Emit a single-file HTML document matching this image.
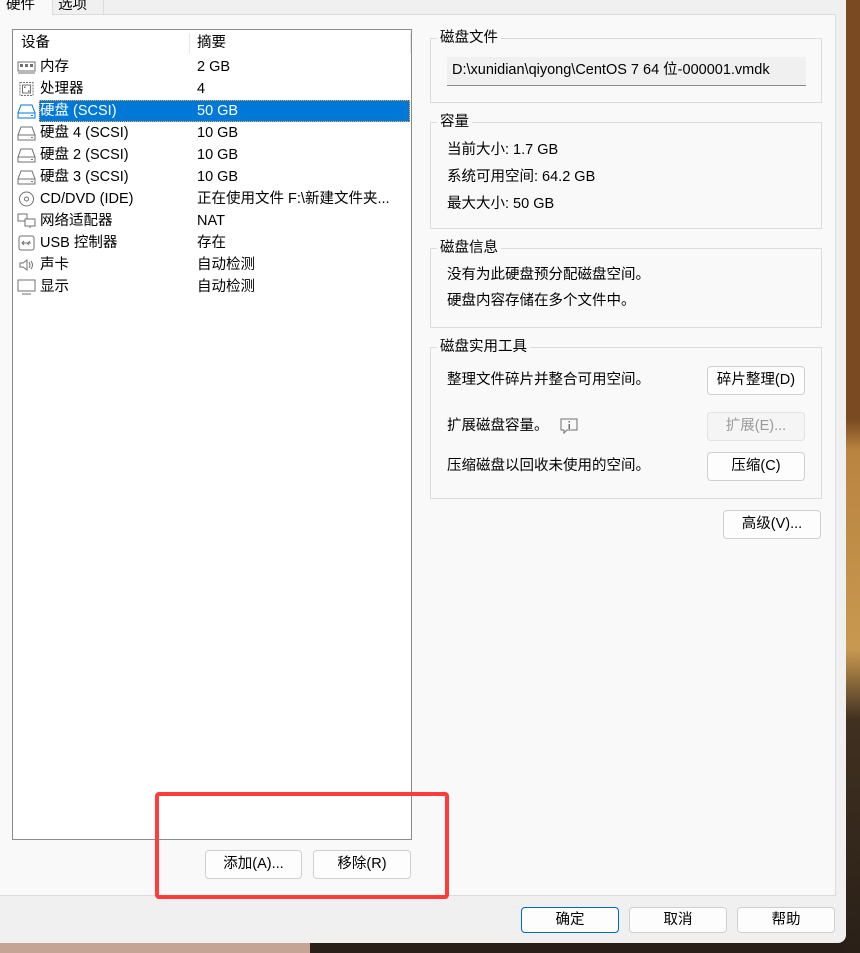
<!DOCTYPE html>
<html><head><meta charset="utf-8"><style>
*{box-sizing:border-box;margin:0;padding:0}
body{width:860px;height:953px;overflow:hidden;position:relative;background:#2a1e18;font-family:"Liberation Sans","Noto Sans CJK SC",sans-serif;font-size:14.5px;color:#000}
.abs{position:absolute}
.bgr{left:846px;top:0;width:14px;height:953px;background:linear-gradient(#7a4a22 0,#7a4a22 420px,#b98440 450px,#c89850 650px,#403020 720px,#2a2018 953px)}
.bgb{left:0;top:943px;width:310px;height:10px;background:#c4a494}
.dlg{left:0;top:0;width:846px;height:943px;background:#f0f0f0;border-bottom-right-radius:8px}
.panel{left:0;top:14px;width:836px;height:882px;background:#f9f9f9;border:1px solid #dcdcdc;border-left:none}
.tab1{left:0;top:0;width:53px;height:15px;background:#f9f9f9;border-right:1px solid #dcdcdc}
.tab2{left:54px;top:0;width:50px;height:14px;background:#f0f0f0;border-right:1px solid #dcdcdc}
.tabt{top:-7px;font-size:14.5px}
.list{left:12px;top:29px;width:400px;height:811px;background:#fff;border:1px solid #8a8a90}
.row{position:absolute;left:0;height:22px;line-height:22px;width:397px}
.row .n{position:absolute;left:27px}
.row .v{position:absolute;left:184px}
.sel{background:#0078d7;color:#fff}
.ico{position:absolute;left:4px;top:3px;width:19px;height:16px}
.grp{position:absolute;left:430px;width:392px;border:1px solid #dcdcdc}
.gl{position:absolute;left:6px;top:-10px;background:#f9f9f9;padding:0 3px;line-height:18px}
.t{position:absolute;left:16px;line-height:18px}
.btn{position:absolute;height:29px;background:#fdfdfd;border:1px solid #d0d0d0;border-radius:4px;text-align:center;line-height:27px}
</style></head><body>
<div class="abs bgr"></div><div class="abs bgb"></div>
<div class="abs dlg"></div>
<div class="abs panel"></div>
<div class="abs tab1"><span class="abs tabt" style="left:6px">硬件</span></div>
<div class="abs tab2"><span class="abs tabt" style="left:4px">选项</span></div>

<div class="abs list">
 <div class="row" style="top:1px;height:25px;line-height:25px"><span class="abs" style="left:8px">设备</span><span class="abs" style="left:176px;top:2px;width:1px;height:20px;background:#e6e6e6"></span><span class="abs" style="left:184px">摘要</span><span class="abs" style="left:397px;top:2px;width:1px;height:20px;background:#e6e6e6"></span></div>
 <div class="row" style="top:26px"><svg class="ico" viewBox="0 0 19 16"><rect x="1" y="3" width="17" height="9" fill="none" stroke="#707070"/><rect x="3" y="5" width="3" height="3" fill="#707070"/><rect x="8" y="5" width="3" height="3" fill="#707070"/><rect x="13" y="5" width="3" height="3" fill="#707070"/><line x1="1" y1="14" x2="18" y2="14" stroke="#707070"/></svg><span class="n">内存</span><span class="v">2 GB</span></div>
 <div class="row" style="top:48px"><svg class="ico" viewBox="0 0 19 16"><rect x="3" y="1.5" width="13" height="13" fill="none" stroke="#707070" stroke-dasharray="2 1"/><rect x="5.5" y="4" width="8" height="8" fill="none" stroke="#707070"/><rect x="7" y="5.5" width="1.5" height="1.5" fill="#707070"/><rect x="11" y="9.5" width="1.5" height="1.5" fill="#707070"/></svg><span class="n">处理器</span><span class="v">4</span></div>
 <div class="row" style="top:70px;"><div class="sel" style="position:absolute;left:26px;top:0;width:371px;height:22px;outline:1px dotted #ffb040;outline-offset:-1px"></div><svg class="ico" viewBox="0 0 19 16"><path d="M4 2h11l3 8v5H1v-5z" fill="none" stroke="#0078d7"/><line x1="1" y1="10" x2="18" y2="10" stroke="#0078d7"/><rect x="14" y="12" width="2" height="1" fill="#0078d7"/></svg><span class="n" style="color:#fff">硬盘 (SCSI)</span><span class="v" style="color:#fff">50 GB</span></div>
 <div class="row" style="top:92px"><svg class="ico" viewBox="0 0 19 16"><path d="M4 2h11l3 8v5H1v-5z" fill="none" stroke="#707070"/><line x1="1" y1="10" x2="18" y2="10" stroke="#707070"/><rect x="14" y="12" width="2" height="1" fill="#707070"/></svg><span class="n">硬盘 4 (SCSI)</span><span class="v">10 GB</span></div>
 <div class="row" style="top:114px"><svg class="ico" viewBox="0 0 19 16"><path d="M4 2h11l3 8v5H1v-5z" fill="none" stroke="#707070"/><line x1="1" y1="10" x2="18" y2="10" stroke="#707070"/><rect x="14" y="12" width="2" height="1" fill="#707070"/></svg><span class="n">硬盘 2 (SCSI)</span><span class="v">10 GB</span></div>
 <div class="row" style="top:136px"><svg class="ico" viewBox="0 0 19 16"><path d="M4 2h11l3 8v5H1v-5z" fill="none" stroke="#707070"/><line x1="1" y1="10" x2="18" y2="10" stroke="#707070"/><rect x="14" y="12" width="2" height="1" fill="#707070"/></svg><span class="n">硬盘 3 (SCSI)</span><span class="v">10 GB</span></div>
 <div class="row" style="top:158px"><svg class="ico" viewBox="0 0 19 16"><circle cx="9.5" cy="8" r="7" fill="none" stroke="#707070"/><circle cx="9.5" cy="8" r="2" fill="none" stroke="#707070"/></svg><span class="n">CD/DVD (IDE)</span><span class="v">正在使用文件 F:\新建文件夹...</span></div>
 <div class="row" style="top:180px"><svg class="ico" viewBox="0 0 19 16"><rect x="1" y="1" width="9" height="7" fill="none" stroke="#707070"/><rect x="8" y="6" width="10" height="7" fill="#fff" stroke="#707070"/><line x1="13" y1="13" x2="13" y2="15" stroke="#707070"/></svg><span class="n">网络适配器</span><span class="v">NAT</span></div>
 <div class="row" style="top:202px"><svg class="ico" viewBox="0 0 19 16"><rect x="2" y="1" width="15" height="14" rx="2" fill="none" stroke="#707070"/><path d="M5 8h9M7 6l-2 2 2 2M11 8l2-2M10 8l2 2" fill="none" stroke="#707070"/></svg><span class="n">USB 控制器</span><span class="v">存在</span></div>
 <div class="row" style="top:224px"><svg class="ico" viewBox="0 0 19 16"><path d="M3 6h3l4-3v10l-4-3H3z M12 5q2 3 0 6 M14 4q3 4 0 8" fill="none" stroke="#707070"/></svg><span class="n">声卡</span><span class="v">自动检测</span></div>
 <div class="row" style="top:246px"><svg class="ico" viewBox="0 0 19 16"><rect x="1" y="1" width="17" height="11" fill="none" stroke="#707070"/><line x1="5" y1="15" x2="14" y2="15" stroke="#707070"/></svg><span class="n">显示</span><span class="v">自动检测</span></div>
</div>

<div class="btn" style="left:205px;top:850px;width:97px">添加(A)...</div>
<div class="btn" style="left:313px;top:850px;width:98px">移除(R)</div>

<div class="grp" style="top:38px;height:65px"><span class="gl">磁盘文件</span>
 <div class="abs" style="left:16px;top:18px;width:359px;height:29px;background:#f0f0f0;border-bottom:1px solid #8a8a8a;padding-left:5px;line-height:26px">D:\xunidian\qiyong\CentOS 7 64 位-000001.vmdk</div></div>
<div class="grp" style="top:122px;height:107px"><span class="gl">容量</span>
 <span class="t" style="top:18px">当前大小: 1.7 GB</span>
 <span class="t" style="top:45px">系统可用空间: 64.2 GB</span>
 <span class="t" style="top:72px">最大大小: 50 GB</span></div>
<div class="grp" style="top:248px;height:80px"><span class="gl">磁盘信息</span>
 <span class="t" style="top:17px">没有为此硬盘预分配磁盘空间。</span>
 <span class="t" style="top:43px">硬盘内容存储在多个文件中。</span></div>
<div class="grp" style="top:347px;height:152px"><span class="gl">磁盘实用工具</span>
 <span class="t" style="top:23px">整理文件碎片并整合可用空间。</span>
 <span class="t" style="top:69px">扩展磁盘容量。</span>
 <svg class="abs" style="left:129px;top:70px" width="19" height="17" viewBox="0 0 19 17"><path d="M1 1h16v11H7l-3 3v-3H1z" fill="none" stroke="#707070"/><rect x="8.5" y="3" width="1.5" height="1.5" fill="#707070"/><rect x="8.5" y="6" width="1.5" height="5" fill="#707070"/></svg>
 <span class="t" style="top:109px">压缩磁盘以回收未使用的空间。</span></div>
<div class="btn" style="left:707px;top:366px;width:98px">碎片整理(D)</div>
<div class="btn" style="left:707px;top:412px;width:98px;background:#f5f5f5;border-color:#e2e2e2;color:#9a9a9a">扩展(E)...</div>
<div class="btn" style="left:707px;top:452px;width:98px">压缩(C)</div>
<div class="btn" style="left:723px;top:510px;width:98px">高级(V)...</div>

<div class="btn" style="left:521px;top:907px;width:98px;height:26px;line-height:24px;border:1px solid #0067c0">确定</div>
<div class="btn" style="left:629px;top:907px;width:98px;height:26px;line-height:24px">取消</div>
<div class="btn" style="left:737px;top:907px;width:98px;height:26px;line-height:24px">帮助</div>

<div class="abs" style="left:155px;top:792px;width:294px;height:107px;border:4px solid #ff3b3b;border-radius:4px"></div>
</body></html>
